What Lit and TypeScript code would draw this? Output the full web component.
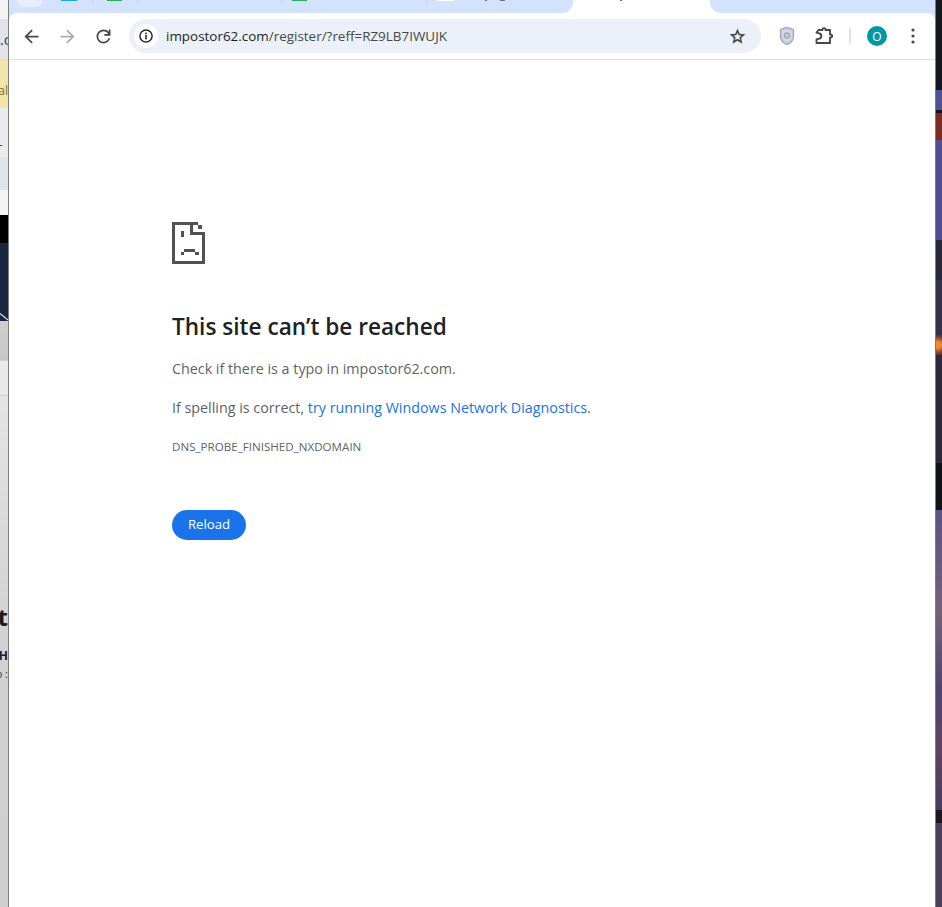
import { LitElement, html, css, svg } from "lit";
import { customElement } from "lit/decorators.js";

function svgRect(x: number, y: number, w: number, h: number) {
  return svg`<rect x=${x} y=${y} width=${w} height=${h} />`;
}

@customElement("app-root")
export class AppRoot extends LitElement {
  static styles = css`
    :host { display: grid; grid-template-columns: 8px 1fr 6px; width: 942px; height: 907px; overflow: hidden; font-family: "Open Sans", "Noto Sans", sans-serif; background: #fff; }
    .left, .right { display: flex; flex-direction: column; overflow: hidden; }
    .lb { display: flex; justify-content: flex-end; white-space: nowrap; overflow: hidden; color: #222; flex: none; }
    .l1 { height: 19px; background: #f3f3f3; }
    .l2 { height: 40px; background: #e1e3e8; align-items: center; font-size: 15px; color: #1f3f78; }
    .l2 span { margin-right: -3px; }
    .l3 { height: 49px; background: #f1e4a8; font-size: 12px; color: #8a6d1c; padding-top: 24px; box-sizing: border-box; line-height: 16px; }
    .l4 { height: 82px; background: linear-gradient(#eaebee 0 60%, #dfe3ea 60%); justify-content: flex-start; }
    .dot { width: 2px; height: 1px; margin-top: 37px; background: #2a4a9a; }
    .l5 { height: 25px; background: #f3f3f3; }
    .l6 { height: 28px; background: #000; }
    .l7 { height: 78px; background: #1b2740; }
    .l7 svg { display: block; margin-top: 70px; }
    .l8 { height: 39px; background: linear-gradient(#cfcfcf, #c6c6c6); }
    .l9 { height: 36px; background: #e9e9e9; border-top: 1px solid #d2d2d2; border-bottom: 1px solid #cfcfcf; box-sizing: border-box; }
    .l10 { flex: 1; background: linear-gradient(#e4e4e4, #d2d2d2 45%, #cecece); display: flex; flex-direction: column; align-items: flex-end; padding-top: 206px; overflow: hidden; white-space: nowrap; }
    .big { height: 30px; font-size: 24px; font-weight: 700; line-height: 30px; color: #1a1a1a; }
    .small1 { height: 14px; margin-top: 17px; font-size: 12px; font-weight: 700; line-height: 14px; color: #0d1b3a; }
    .small2 { height: 14px; margin-top: 4px; font-size: 11px; line-height: 14px; color: #333; }

    .r { flex: none; }
    .r1 { height: 90px; background: #15181f; }
    .r2 { height: 20px; background: #4e5490; }
    .r3 { height: 3px; background: #16161e; }
    .r4 { height: 27px; background: #7a2c20; }
    .r5 { height: 100px; background: #4f4f8e; }
    .r6 { height: 40px; background: #28283a; }
    .r7 { height: 55px; background: #33324a; }
    .r8 { height: 20px; background: radial-gradient(circle at 30% 50%, #f08a30 0 3px, #7a4030 8px, #2e2a3a 12px); }
    .r9 { height: 108px; background: #2c2a3a; }
    .r10 { height: 47px; background: #111118; }
    .r11 { height: 300px; background: linear-gradient(#5d5486, #756078 35%, #4d4470 60%, #614363 80%, #463d5f); }
    .r12 { height: 13px; background: #1c1820; }
    .r13 { flex: 1; background: #4d3f5c; }

    .win { display: flex; flex-direction: column; background: #d3e3fd; border-left: 1px solid #7c7c7c; border-right: 1px solid #7c7c7c; min-width: 0; }
    .strip { display: flex; height: 13px; background: #fff; flex: none; }
    .seg { background: #d3e3fd; display: flex; align-items: flex-start; overflow: hidden; }
    .seg.a { width: 564px; border-bottom-right-radius: 11px; flex: none; }
    .seg.b { flex: 1; border-bottom-left-radius: 11px; }
    .active { width: 137px; height: 13px; display: flex; align-items: flex-start; flex: none; }
    .ghost { width: 26px; height: 7px; margin-left: 8px; background: #e6eefc; border-radius: 0 0 8px 8px; flex: none; }
    .fav { height: 1px; flex: none; }
    .fav.blue { width: 16px; margin-left: 18px; background: #1da6e2; }
    .fav.g1 { width: 15px; margin-left: 14px; background: #27ae60; }
    .fav.g2 { width: 15px; margin-left: 10px; background: #27ae60; }
    .fav.w { width: 17px; margin-left: 10px; background: #fff; }
    .sep { width: 1px; height: 3px; background: #bcd0f0; flex: none; }
    .s1 { margin-left: 15px; }
    .s2 { margin-left: 15px; }
    .s3 { margin-left: 143px; }
    .s4 { margin-left: 119px; }
    .mark { height: 1px; background: #6a7180; flex: none; }
    .m1 { width: 2px; margin-left: 31px; }
    .m2 { width: 5px; margin-left: 13px; }
    .m3 { width: 2px; margin-left: 47px; }

    .toolbar { height: 46px; background: #fff; border-radius: 8px 8px 0 0; display: flex; align-items: center; box-sizing: border-box; padding: 0 0 0 4px; flex: none; }
    .tb { width: 36px; height: 36px; display: flex; align-items: center; justify-content: center; flex: none; }
    .tb svg { display: block; }
    .omni { width: 632px; height: 34px; margin-left: 8px; border-radius: 17px; background: #ebf0f9; display: flex; align-items: center; box-sizing: border-box; padding: 0 14px 0 5px; flex: none; }
    .chip { width: 24px; height: 24px; border-radius: 50%; background: #fff; display: flex; align-items: center; justify-content: center; flex: none; }
    .url { margin-left: 8px; font-size: 13.45px; color: #474747; white-space: nowrap; flex: 1; }
    .url b { font-weight: 400; color: #1f1f1f; }
    .actions { display: flex; align-items: center; margin-left: 8px; }
    .divider { width: 2px; height: 16px; background: #d3e3fd; margin: 0 16px 0 8px; flex: none; }
    .avatar { width: 20px; height: 20px; border-radius: 50%; background: #0097a7; color: #fff; font-size: 12px; display: flex; align-items: center; justify-content: center; flex: none; }
    .menu { margin-left: 8px; }
    .line { height: 1px; background: #e0e0e0; flex: none; }

    .page { flex: 1; background: #fff; padding: 162px 0 0 163px; color: #5f6368; font-size: 14.3px; }
    .sad { display: block; }
    h1 { margin: 46px 0 0; font-size: 22.6px; line-height: 34px; font-weight: 600; color: #202124; }
    p { margin: 0; line-height: 20px; }
    .p1 { margin-top: 15px; }
    .p2 { margin-top: 19px; }
    a { color: #1a73e8; text-decoration: none; }
    .code { margin-top: 19px; font-size: 11.6px; line-height: 20px; }
    button { display: block; margin-top: 53px; width: 74px; height: 30px; border: 0; border-radius: 15px; background: #1a73e8; color: #fff; font: 500 13.2px "Open Sans", sans-serif; padding: 0 0 2px; }
  `;

  private sad() {
    const r: [number, number, number, number][] = [
      [0, 0, 26, 3], [0, 0, 3, 42], [0, 39, 33, 3], [30, 10, 3, 32],
      [18, 0, 3, 13], [18, 10, 15, 3], [26, 3, 4, 4],
      [9, 9, 3, 6], [12, 27, 11, 3], [9, 30, 3, 3], [23, 30, 4, 3],
    ];
    return html`<svg class="sad" width="33" height="42" viewBox="0 0 33 42" shape-rendering="crispEdges" fill="#525252">
      ${r.map(([x, y, w, h]) => svgRect(x, y, w, h))}
    </svg>`;
  }

  render() {
    return html`
      <div class="left">
        <div class="lb l1"></div>
        <div class="lb l2"><span>e.c</span></div>
        <div class="lb l3">al</div>
        <div class="lb l4"><span class="dot"></span></div>
        <div class="lb l5"></div>
        <div class="lb l6"></div>
        <div class="lb l7"><svg width="8" height="8" viewBox="0 0 8 8"><path d="M0 .5 8 7" stroke="#d8dce4" stroke-width="1.200" fill="none"/></svg></div>
        <div class="lb l8"></div>
        <div class="lb l9"></div>
        <div class="l10">
          <div class="big">t</div>
          <div class="small1">H</div>
          <div class="small2">o :</div>
        </div>
      </div>

      <div class="win">
        <div class="strip">
          <div class="seg a">
            <span class="ghost"></span>
            <span class="fav blue"></span>
            <span class="sep s1"></span>
            <span class="fav g1"></span>
            <span class="sep s2"></span>
            <span class="sep s3"></span>
            <span class="fav g2"></span>
            <span class="sep s4"></span>
            <span class="fav w"></span>
            <span class="mark m1"></span>
            <span class="mark m2"></span>
          </div>
          <div class="active"><span class="mark m3"></span></div>
          <div class="seg b"></div>
        </div>
        <div class="toolbar">
          <div class="tb"><svg width="21" height="21" viewBox="0 0 24 24" fill="#474747"><path d="M7.825 13l5.600 5.600L12 20l-8-8 8-8 1.425 1.400-5.600 5.600H20v2Z"/></svg></div>
          <div class="tb"><svg width="21" height="21" viewBox="0 0 24 24" fill="#acacac"><path d="M16.175 13l-5.600 5.600L12 20l8-8-8-8-1.425 1.400 5.600 5.600H4v2Z"/></svg></div>
          <div class="tb"><svg width="21" height="21" viewBox="0 0 24 24" fill="#474747"><path d="M12 20q-3.350 0-5.675-2.325T4 12q0-3.350 2.325-5.675T12 4q1.725 0 3.300.712T18 6.750V4h2v7h-7V9h4.200q-.8-1.400-2.188-2.200T12 6Q9.500 6 7.750 7.750T6 12q0 2.500 1.750 4.250T12 18q1.925 0 3.475-1.100T17.650 14h2.100q-.7 2.650-2.850 4.325T12 20Z"/></svg></div>
          <div class="omni">
            <div class="chip"><svg width="16" height="16" viewBox="0 0 16 16"><circle cx="8" cy="8" r="6.100" fill="none" stroke="#2b2b2b" stroke-width="1.500"/><rect x="7.200" y="7" width="1.600" height="4.400" fill="#2b2b2b"/><rect x="7.200" y="4.600" width="1.600" height="1.600" fill="#2b2b2b"/></svg></div>
            <div class="url"><b>impostor62.com</b>/register/?reff=RZ9LB7IWUJK</div>
            <svg width="19" height="19" viewBox="0 0 24 24" fill="#474747"><path d="M8.850 16.825l3.150-1.900 3.150 1.925-.825-3.600 2.775-2.400-3.650-.325-1.450-3.400-1.450 3.375-3.650.325 2.775 2.425-.825 3.575ZM5.825 21l1.625-7.025L2 9.250l7.200-.625L12 2l2.800 6.625 7.200.625-5.450 4.725L18.175 21 12 17.275 5.825 21Z"/></svg>
          </div>
          <div class="actions">
            <div class="tb"><svg width="18" height="20" viewBox="0 0 18 20"><path d="M9 1.200 15.600 3.400V10c0 4-2.800 7.200-6.600 8.600C5.200 17.200 2.400 14 2.400 10V3.400Z" fill="#c3c9d6" stroke="#a3abbc" stroke-width="1.200"/><path d="M9 3.500 13.800 5V10c0 3-2 5.200-4.800 6.500C6.200 15.200 4.200 13 4.200 10V5Z" fill="#d5d9e3"/><circle cx="9" cy="9.500" r="2.600" fill="#c3c9d6" stroke="#99a2b5" stroke-width="1.100"/></svg></div>
            <div class="tb"><svg width="20" height="20" viewBox="0 0 20 20" fill="none" stroke="#474747" stroke-width="1.900" stroke-linejoin="round"><path d="M5.500 4H9.500V3.600a1.500 1.500 0 0 1 3 0V4H17V8.500h.6a1.500 1.500 0 0 1 0 3H17V17H3.500V13.500L5.500 12.800a2.800 2.800 0 0 0 0-5.600L3.500 6.500Z"/></svg></div>
            <span class="divider"></span>
            <span class="avatar">O</span>
            <div class="tb menu"><svg width="20" height="20" viewBox="0 0 20 20" fill="#474747"><circle cx="10" cy="4" r="1.600"/><circle cx="10" cy="10" r="1.600"/><circle cx="10" cy="16" r="1.600"/></svg></div>
          </div>
        </div>
        <div class="line"></div>
        <div class="page">
          ${this.sad()}
          <h1>This site can’t be reached</h1>
          <p class="p1">Check if there is a typo in impostor62.com.</p>
          <p class="p2">If spelling is correct, <a>try running Windows Network Diagnostics</a>.</p>
          <p class="code">DNS_PROBE_FINISHED_NXDOMAIN</p>
          <button>Reload</button>
        </div>
      </div>

      <div class="right">
        <div class="r r1"></div><div class="r r2"></div><div class="r r3"></div><div class="r r4"></div><div class="r r5"></div><div class="r r6"></div><div class="r r7"></div><div class="r r8"></div><div class="r r9"></div><div class="r r10"></div><div class="r r11"></div><div class="r r12"></div><div class="r r13"></div>
      </div>
    `;
  }
}
